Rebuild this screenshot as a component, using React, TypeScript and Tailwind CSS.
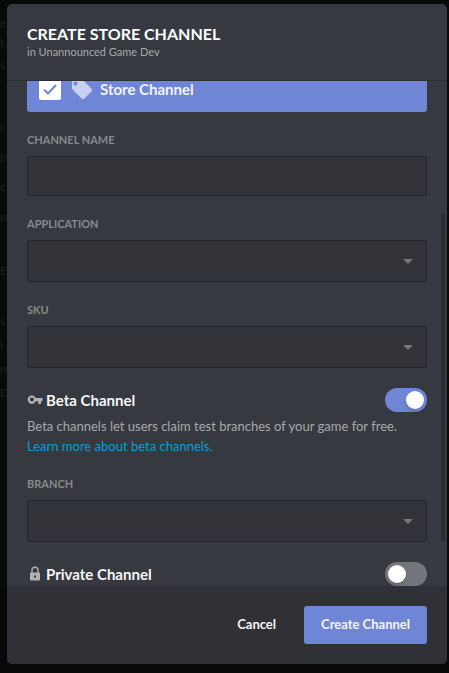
import type { ReactNode } from "react";

const backdropLines = [
  { text: "e", height: "h-[20px]" },
  { text: "t", height: "h-[22px]" },
  { text: "s", height: "h-[62px]" },
  { text: "c", height: "h-[30px]" },
  { text: "p", height: "h-[30px]" },
  { text: "c", height: "h-[30px]" },
  { text: "p", height: "h-[54px]" },
  { text: "E", height: "h-[50px]" },
  { text: "s", height: "h-[24px]" },
  { text: "i", height: "h-[24px]" },
  { text: "n", height: "h-[24px]" },
  { text: "D", height: "h-[24px]" },
];

function Label({ htmlFor, children }: { htmlFor: string; children: ReactNode }) {
  return (
    <label htmlFor={htmlFor} className="mb-2 block text-[11px] leading-4 font-bold text-[#87898d] uppercase">
      {children}
    </label>
  );
}

function SelectField({ id, label }: { id: string; label: string }) {
  return (
    <div>
      <Label htmlFor={id}>{label}</Label>
      <div className="relative">
        <select
          id={id}
          className="block h-[42px] w-full appearance-none rounded-[3px] border border-[#222428] bg-[#323338] px-3 text-base text-gray-200 outline-none"
        />
        <svg
          viewBox="0 0 10 5"
          className="pointer-events-none absolute top-[19px] right-[14px] h-[5px] w-[10px] fill-[#75777b]"
          aria-hidden="true"
        >
          <path d="M0 0h10L5 5z" />
        </svg>
      </div>
    </div>
  );
}

function SwitchRow({ id, label, icon, on }: { id: string; label: string; icon: ReactNode; on?: boolean }) {
  return (
    <div className="flex h-6 items-center justify-between">
      <label htmlFor={id} className="flex items-center gap-[3px] text-[15px] leading-6 font-bold text-[#f6f6f7]">
        {icon}
        {label}
      </label>
      <input
        id={id}
        type="checkbox"
        role="switch"
        defaultChecked={on}
        className="flex h-6 w-[42px] appearance-none items-center rounded-full bg-[#72767d] px-[3px] before:block before:size-[18px] before:rounded-full before:bg-white before:shadow-md checked:justify-end checked:bg-[#6f86d6]"
      />
    </div>
  );
}

function KeyIcon() {
  return (
    <svg viewBox="0 0 16 16" className="size-4 fill-[#b0b2b5]" aria-hidden="true">
      <path
        fillRule="evenodd"
        d="M8.7 6A4.200 4.200 0 1 0 8.700 9.200h2.600V12h2.700V9.200h1.500V6zM4.900 9.600a2 2 0 1 1 0-4 2 2 0 0 1 0 4z"
      />
    </svg>
  );
}

function LockIcon() {
  return (
    <svg viewBox="0 0 16 16" className="size-4 fill-[#b0b2b5]" aria-hidden="true">
      <path
        fillRule="evenodd"
        d="M4.300 6.500V4.300a3.700 3.700 0 0 1 7.400 0v2.200h.3a1 1 0 0 1 1 1v6a1 1 0 0 1-1 1H4a1 1 0 0 1-1-1v-6a1 1 0 0 1 1-1zm1.400 0h4.600V4.300a2.300 2.300 0 0 0-4.600 0zM7 9.500v2h2v-2z"
      />
    </svg>
  );
}

function TagIcon() {
  return (
    <svg viewBox="0 0 24 24" className="size-6 fill-[#c7d0f0]" aria-hidden="true">
      <path d="M21.410 11.580l-9-9C12.050 2.220 11.550 2 11 2H4c-1.100 0-2 .9-2 2v7c0 .55.220 1.050.590 1.420l9 9c.360.360.860.580 1.410.580.550 0 1.050-.220 1.410-.590l7-7c.370-.360.590-.860.590-1.410 0-.550-.230-1.060-.590-1.420zM5.500 8.500C4.400 8.500 3.500 7.600 3.500 6.500S4.400 4.500 5.500 4.500s2 .9 2 2-.9 2-2 2z" />
    </svg>
  );
}

export default function App() {
  return (
    <div className="relative h-screen overflow-hidden bg-[#080909] pt-1 pr-[2px] pb-[9px] pl-[7px] font-['Lato','Noto_Sans',sans-serif]">
      <div
        aria-hidden="true"
        className="absolute top-[13px] left-0 flex flex-col text-xs leading-5 text-[#1d1f21]"
      >
        {backdropLines.map((line, i) => (
          <span key={i} className={line.height}>
            {line.text}
          </span>
        ))}
      </div>

      <form className="relative flex h-full flex-col overflow-hidden rounded-[5px] bg-[#36393f]">
        <header className="h-[77px] shrink-0 border-b border-[#2c2e32] px-5 pt-5">
          <h1 className="text-base leading-5 font-bold text-white uppercase">Create Store Channel</h1>
          <p className="text-[11px] leading-4 text-[#a7a9ac]">in Unannounced Game Dev</p>
        </header>

        <main className="flex min-h-0 flex-1 flex-col justify-end overflow-hidden px-5">
          <div className="flex shrink-0 flex-col gap-5">
            <label className="flex h-[46px] items-center rounded-[3px] bg-[#6f86d6] px-3 text-[15px] font-bold text-[#f0f3fc]">
              <input type="checkbox" defaultChecked className="sr-only" />
              <span className="flex size-[22px] items-center justify-center rounded-[2px] bg-white">
                <svg viewBox="0 0 14 11" className="h-[11px] w-[14px]" fill="none" stroke="#6f86d6" strokeWidth="2" aria-hidden="true">
                  <path d="M1 5.500l4 4L13 1" />
                </svg>
              </span>
              <span className="mr-[6px] ml-[9px]">
                <TagIcon />
              </span>
              Store Channel
            </label>

            <div>
              <Label htmlFor="name">Channel Name</Label>
              <input
                id="name"
                type="text"
                className="block h-10 w-full rounded-[3px] border border-[#222428] bg-[#323338] px-3 text-base text-gray-200 outline-none"
              />
            </div>

            <SelectField id="application" label="Application" />
            <SelectField id="sku" label="SKU" />

            <div>
              <SwitchRow id="beta" label="Beta Channel" icon={<KeyIcon />} on />
              <p className="mt-1 text-[13px] leading-5 text-[#a7a9ac]">
                Beta channels let users claim test branches of your game for free.{" "}
                <a href="#beta" className="block text-[#0c9bd8]">
                  Learn more about beta channels.
                </a>
              </p>
            </div>

            <SelectField id="branch" label="Branch" />
            <SwitchRow id="private" label="Private Channel" icon={<LockIcon />} />
          </div>
        </main>

        <div aria-hidden="true" className="absolute top-[209px] right-[2px] bottom-[122px] w-1 rounded-full bg-[#2b2d31]" />

        <footer className="flex h-[78px] shrink-0 items-center justify-end bg-[#2f3136] px-5 text-[13px] font-bold text-[#f6f6f7]">
          <button type="button" className="h-[38px] px-7">
            Cancel
          </button>
          <button type="submit" className="h-[38px] rounded-[3px] bg-[#6f86d6] px-[17px]">
            Create Channel
          </button>
        </footer>
      </form>
    </div>
  );
}
